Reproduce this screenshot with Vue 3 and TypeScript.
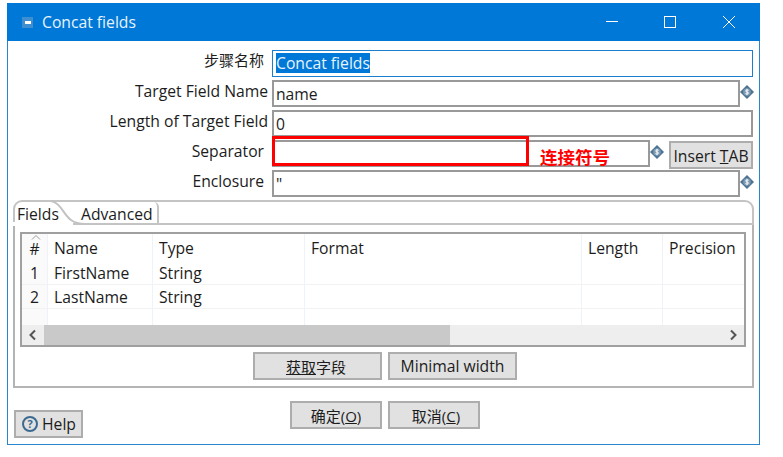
<script setup lang="ts">
const columns = [
  { name: 'Name', w: 105 },
  { name: 'Type', w: 152 },
  { name: 'Format', w: 277 },
  { name: 'Length', w: 81 },
  { name: 'Precision', w: 81 },
]
const rows = [
  { id: '1', cells: ['FirstName', 'String', '', '', ''] },
  { id: '2', cells: ['LastName', 'String', '', '', ''] },
  { id: '', cells: ['', '', '', '', ''] },
]
</script>

<template>
  <div class="page">
    <div class="window">
      <div class="titlebar">
        <span class="app-icon"><i></i></span>
        <span class="title">Concat fields</span>
        <svg class="controls" width="130" height="16" viewBox="0 0 130 16" fill="none" stroke="#fff" stroke-width="1">
          <path d="M0 7.5h12" />
          <rect x="58.5" y="2.5" width="11" height="11" />
          <path d="M117 2l12 12M129 2l-12 12" />
        </svg>
      </div>

      <div class="body">
        <div class="row">
          <label class="tight cjk">步骤名称</label>
          <div class="input focus"><span class="sel">Concat fields</span></div>
        </div>
        <div class="row">
          <label>Target Field Name</label>
          <div class="input short">name</div>
          <svg class="var" width="14" height="14" viewBox="0 0 14 14">
            <path d="M7 0l7 7-7 7-7-7z" fill="#4c7392" />
            <circle cx="7" cy="7" r="3.8" fill="#7d9ab2" />
            <path d="M8.6 5.4C8 4.8 5.6 4.7 5.6 6 5.6 7.3 8.5 6.7 8.5 8 8.5 9.3 6 9.2 5.4 8.6M7 3.8v6.4" fill="none" stroke="#fff" stroke-width=".9" />
          </svg>
        </div>
        <div class="row">
          <label>Length of Target Field</label>
          <div class="input">0</div>
        </div>
        <div class="row">
          <label class="tight">Separator</label>
          <div class="input sep"></div>
          <svg class="var" width="14" height="14" viewBox="0 0 14 14">
            <path d="M7 0l7 7-7 7-7-7z" fill="#4c7392" />
            <circle cx="7" cy="7" r="3.8" fill="#7d9ab2" />
            <path d="M8.6 5.4C8 4.8 5.6 4.7 5.6 6 5.6 7.3 8.5 6.7 8.5 8 8.5 9.3 6 9.2 5.4 8.6M7 3.8v6.4" fill="none" stroke="#fff" stroke-width=".9" />
          </svg>
          <button class="btn insert">Insert <u>T</u>AB</button>
          <div class="redbox"></div>
          <span class="note">连接符号</span>
        </div>
        <div class="row">
          <label class="tight">Enclosure</label>
          <div class="input short">"</div>
          <svg class="var" width="14" height="14" viewBox="0 0 14 14">
            <path d="M7 0l7 7-7 7-7-7z" fill="#4c7392" />
            <circle cx="7" cy="7" r="3.8" fill="#7d9ab2" />
            <path d="M8.6 5.4C8 4.8 5.6 4.7 5.6 6 5.6 7.3 8.5 6.7 8.5 8 8.5 9.3 6 9.2 5.4 8.6M7 3.8v6.4" fill="none" stroke="#fff" stroke-width=".9" />
          </svg>
        </div>

        <div class="folder">
          <div class="tabs">
            <span class="tab active">Fields</span>
            <span class="tab second">Advanced</span>
            <svg class="tab-curve" width="150" height="26" viewBox="0 0 150 26" fill="none">
              <rect x="0" y="22" width="60" height="4" fill="#fff" />
              <path d="M38 1C48 3 50 14 58 20 62 23 66 24 72 24" stroke="#c2c2c2" stroke-width="2" />
            </svg>
          </div>
          <div class="panel">
            <div class="grid">
              <div class="thead">
                <div class="num"><svg class="sort" width="10" height="5" viewBox="0 0 10 5"><path d="M1 4.5l4-4 4 4" fill="none" stroke="#9a9a9a" /></svg>#</div>
                <div v-for="c in columns" :key="c.name" class="th" :style="{ width: c.w + 'px' }">{{ c.name }}</div>
              </div>
              <div v-for="(r, i) in rows" :key="i" class="tr" :class="{ last: i === 2 }">
                <div class="num">{{ r.id }}</div>
                <div v-for="(v, j) in r.cells" :key="j" class="td" :style="{ width: columns[j].w + 'px' }">{{ v }}</div>
              </div>
              <div class="scroll">
                <svg class="arrow" width="22" height="20" viewBox="0 0 22 20"><path d="M13 5.5L8.5 10l4.5 4.5" fill="none" stroke="#555" stroke-width="2" /></svg>
                <div class="thumb"></div>
                <svg class="arrow end" width="22" height="20" viewBox="0 0 22 20"><path d="M9 5.5l4.5 4.5L9 14.5" fill="none" stroke="#555" stroke-width="2" /></svg>
              </div>
            </div>
            <div class="grid-actions">
              <button class="btn get cjk"><u>获取</u>字段</button>
              <button class="btn min">Minimal width</button>
            </div>
          </div>
        </div>

        <div class="footer">
          <button class="btn help"><span class="q">?</span>Help</button>
          <button class="btn ok cjk">确定(<u>O</u>)</button>
          <button class="btn cancel cjk">取消(<u>C</u>)</button>
        </div>
      </div>
    </div>
  </div>
</template>

<style scoped>
.page {
  width: 783px;
  height: 457px;
  box-sizing: border-box;
  padding: 3px 0 0 7px;
  background: #fff;
  font-family: "Open Sans", "Noto Sans", "Noto Sans CJK SC", sans-serif;
  font-size: 15.7px;
  color: #1c1c1c;
  overflow: hidden;
}
.cjk {
  font-size: 15px;
}
.window {
  width: 753px;
  height: 442px;
  box-sizing: border-box;
  border: 1px solid #2a85cf;
  border-top: 0;
}
.titlebar {
  height: 38px;
  margin: 0 -1px;
  background: #0078d7;
  display: flex;
  align-items: center;
  color: #e8f3fb;
  padding-left: 15px;
}
.app-icon {
  width: 11px;
  height: 11px;
  background: #3f8ed0;
  display: flex;
  align-items: center;
  justify-content: center;
}
.app-icon i {
  width: 6px;
  height: 3px;
  background: #fff;
}
.title {
  margin-left: 9px;
}
.controls {
  margin-left: auto;
  margin-right: 24px;
}
.body {
  padding-top: 9px;
}
.row {
  position: relative;
  height: 30px;
  display: flex;
  align-items: flex-start;
}
label {
  width: 263px;
  padding-right: 3px;
  box-sizing: border-box;
  text-align: right;
  line-height: 22px;
  flex: none;
}
label.tight {
  padding-right: 7px;
}
label.cjk {
  line-height: 20px;
}
.input {
  margin-left: 1px;
  width: 481px;
  height: 27px;
  box-sizing: border-box;
  border: 2px solid #999;
  padding-left: 2px;
  line-height: 25px;
  flex: none;
}
.focus {
  border: 1px solid #1b7fd0;
  line-height: 24px;
  padding-left: 3px;
}
.sel {
  background: #0078d7;
  color: #e8f3fb;
  display: inline-block;
  line-height: 20px;
}
.short {
  width: 468px;
}
.sep {
  width: 378px;
}
.var {
  margin: 5px 0 0 0;
  flex: none;
}
.btn {
  font: inherit;
  color: inherit;
  background: #e1e1e1;
  border: 2px solid #adadad;
  padding: 0;
  height: 28px;
  box-sizing: border-box;
  flex: none;
}
.btn.cjk {
  font-size: 15px;
}
.insert {
  width: 84px;
  margin: 1px 0 0 5px;
  padding-top: 1px;
}
.redbox {
  position: absolute;
  left: 264px;
  top: -4px;
  width: 257px;
  height: 30px;
  box-sizing: border-box;
  border: 3px solid #f00;
}
.note {
  position: absolute;
  left: 532px;
  top: 5px;
  color: #f00;
  font-weight: 700;
  font-size: 17.5px;
  line-height: 24px;
  font-family: "Noto Sans CJK SC", sans-serif;
}
.folder {
  margin: 0 5px;
  height: 188px;
  width: 741px;
  box-sizing: border-box;
}
.tabs {
  position: relative;
  height: 25px;
  display: flex;
  border: 2px solid #c4c4c4;
  border-radius: 9px 9px 0 0;
  border-bottom-width: 2px;
  box-sizing: border-box;
}
.tab {
  line-height: 24px;
  padding-left: 2px;
}
.tab.active {
  width: 64px;
}
.tab.second {
  width: 78px;
  border-right: 2px solid #c4c4c4;
  border-radius: 0 5px 0 0;
  box-sizing: border-box;
  padding-left: 0;
}
.tab-curve {
  position: absolute;
  left: -2px;
  top: -2px;
}
.panel {
  height: 163px;
  box-sizing: border-box;
  border: 2px solid #b4b4b4;
  border-top: 0;
  padding: 7px 5px 0;
}
.grid {
  width: 726px;
  height: 115px;
  box-sizing: border-box;
  border: 2px solid #a0a0a0;
}
.thead, .tr {
  display: flex;
}
.thead {
  height: 27px;
  line-height: 29px;
}
.tr {
  height: 24px;
  line-height: 24px;
  border-bottom: 1px solid #f2f2f2;
  box-sizing: border-box;
}
.tr.last {
  height: 16px;
  border-bottom: 0;
}
.num {
  position: relative;
  width: 25px;
  flex: none;
  text-align: center;
  background: #fafafa;
}
.sort {
  position: absolute;
  left: 9px;
  top: 1px;
}
.thead .num {
  line-height: 31px;
}
.th, .td {
  box-sizing: border-box;
  flex: none;
  padding-left: 6px;
  border-left: 1px solid #eef3fa;
}
.scroll {
  height: 20px;
  background: #eee;
  display: flex;
  align-items: stretch;
}
.arrow {
  flex: none;
}
.arrow.end {
  margin-left: auto;
}
.thumb {
  width: 406px;
  background: #c9c9c9;
}
.grid-actions {
  display: flex;
  gap: 6px;
  padding: 5px 0 0 233px;
}
.get {
  width: 129px;
  padding-right: 3px;
}
.min {
  width: 129px;
}
.footer {
  display: flex;
  align-items: flex-start;
  padding: 13px 0 0 6px;
}
.help {
  width: 69px;
  margin-top: 9px;
  display: flex;
  align-items: center;
  padding-left: 6px;
}
.q {
  width: 12px;
  height: 12px;
  border: 2px solid #3a6a90;
  border-radius: 50%;
  margin-right: 4px;
  font-size: 11px;
  line-height: 12px;
  text-align: center;
  font-weight: 700;
  color: #3a6a90;
}
.ok {
  width: 92px;
  margin-left: 207px;
}
.cancel {
  width: 92px;
  margin-left: 6px;
  padding-left: 4px;
}
</style>

<style>
html, body {
  margin: 0;
  background: #fff;
}
</style>
